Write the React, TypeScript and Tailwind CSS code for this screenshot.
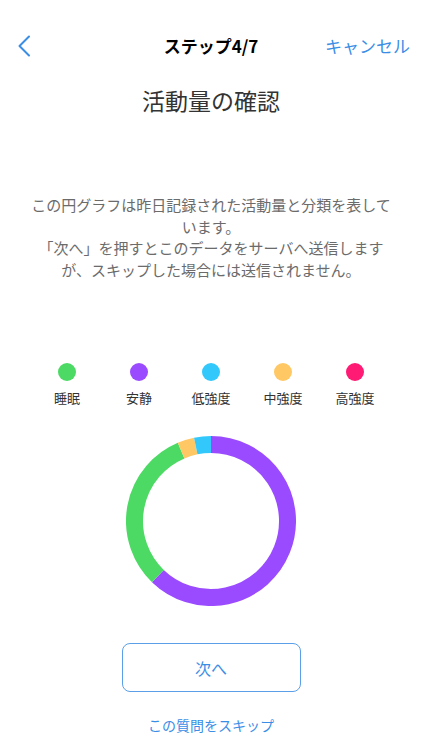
import React from 'react';

const legend = [
  { label: '睡眠', color: 'bg-[#4cd964]' },
  { label: '安静', color: 'bg-[#9a4bff]' },
  { label: '低強度', color: 'bg-[#33c8fc]' },
  { label: '中強度', color: 'bg-[#ffc864]' },
  { label: '高強度', color: 'bg-[#ff1a74]' },
];

// angles are degrees clockwise from 12 o'clock
const segments = [
  { from: 0, to: 224, color: '#9a4bff' },
  { from: 224, to: 337, color: '#4cd964' },
  { from: 337, to: 348.5, color: '#ffc864' },
  { from: 348.5, to: 360, color: '#33c8fc' },
];

const point = (cx: number, cy: number, r: number, deg: number) => {
  const a = ((deg - 90) * Math.PI) / 180;
  return [cx + r * Math.cos(a), cy + r * Math.sin(a)];
};

const arc = (from: number, to: number) => {
  const [x1, y1] = point(85, 85, 76.5, from);
  const [x2, y2] = point(85, 85, 76.5, to - 0.001);
  const large = to - from > 180 ? 1 : 0;
  return `M ${x1} ${y1} A 76.5 76.5 0 ${large} 1 ${x2} ${y2}`;
};

const Donut = () => (
  <svg width="170" height="170" viewBox="0 0 170 170">
    {segments.map((s, i) => (
      <path key={i} d={arc(s.from, s.to)} fill="none" stroke={s.color} strokeWidth={17} />
    ))}
  </svg>
);

const App = () => {
  return (
    <div className="w-[422px] h-[750px] bg-white font-['Noto_Sans_CJK_JP','Noto_Sans',sans-serif] flex flex-col items-center">
      {/* Nav */}
      <div className="w-full h-[44px] mt-[24px] flex items-center justify-between pl-[17px] pr-[12px] relative">
        <svg width="14" height="22" viewBox="0 0 14 22" fill="none">
          <path d="M12 1.5 L2.5 11 L12 20.5" stroke="#3a8ee6" strokeWidth="2" strokeLinecap="round" strokeLinejoin="round" />
        </svg>
        <div className="absolute left-1/2 -translate-x-1/2 text-[17px] font-bold text-black">ステップ4/7</div>
        <div className="text-[17px] text-[#3a8ee6]">キャンセル</div>
      </div>

      <h1 className="mt-[17px] text-[23px] leading-[30px] text-[#333]">活動量の確認</h1>

      <p className="mt-[79px] w-[370px] text-center text-[15px] leading-[21.5px] text-[#6b6b6b]">
        この円グラフは昨日記録された活動量と分類を表しています。
        <br />
        「次へ」を押すとこのデータをサーバへ送信しますが、スキップした場合には送信されません。
      </p>

      {/* Legend */}
      <div className="mt-[83px] flex">
        {legend.map((l) => (
          <div key={l.label} className="w-[72px] flex flex-col items-center">
            <div className={`w-[18px] h-[18px] rounded-full ${l.color}`} />
            <div className="mt-[8px] text-[13px] leading-[18px] text-[#333]">{l.label}</div>
          </div>
        ))}
      </div>

      <div className="mt-[29px]">
        <Donut />
      </div>

      <button className="mt-[37px] w-[179px] h-[49px] border border-[#5a9fe8] rounded-[8px] text-[16px] text-[#3a8ee6]">
        次へ
      </button>

      <div className="mt-[23px] text-[14px] leading-[20px] text-[#3a8ee6]">この質問をスキップ</div>
    </div>
  );
};

export default App;
